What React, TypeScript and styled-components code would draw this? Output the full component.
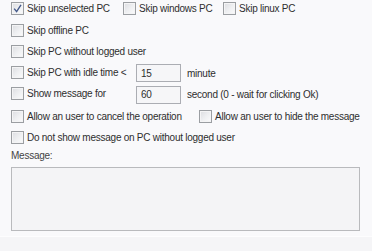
import React from "react";
import styled, { createGlobalStyle } from "styled-components";

const GlobalStyle = createGlobalStyle`
  html, body {
    margin: 0;
    padding: 0;
    background: #f9f9fb;
  }
  body {
    font-family: "Liberation Sans", Arial, sans-serif;
    font-size: 10px;
    letter-spacing: -0.25px;
    color: #2e2e2e;
  }
`;

const Panel = styled.div`
  width: 372px;
  height: 251px;
  box-sizing: border-box;
  padding: 0 12px 0 11px;
  display: flex;
  flex-direction: column;
  overflow: hidden;
`;

const Options = styled.div`
  display: flex;
  flex-direction: column;
  margin-top: -2px;
`;

const Row = styled.div`
  display: flex;
  align-items: center;
  height: 21.5px;
`;

const Option = styled.label<{ $width?: number }>`
  display: inline-flex;
  align-items: center;
  gap: 3px;
  white-space: nowrap;
  cursor: default;
  width: ${({ $width }) => ($width ? `${$width}px` : "auto")};
  flex: none;
`;

const Box = styled.span`
  width: 13px;
  height: 13px;
  box-sizing: border-box;
  border: 1px solid #9b9ea2;
  background: linear-gradient(135deg, #dcdde1 0%, #eff0f2 55%, #fbfbfc 100%);
  box-shadow: inset 0 0 0 1px #f4f4f5;
  display: inline-flex;
  align-items: center;
  justify-content: center;
  flex: none;
`;

const CheckBox = ({ checked }: { checked?: boolean }) => (
  <Box>
    {checked && (
      <svg width="9" height="9" viewBox="0 0 9 9">
        <path d="M1.2 4.6 L3.6 7.6 L8 0.8" fill="none" stroke="#44598a" strokeWidth="1.4" />
      </svg>
    )}
  </Box>
);

const LabelCell = styled.div`
  width: 125px;
  flex: none;
`;

const NumberField = styled.input`
  width: 45px;
  height: 18px;
  box-sizing: border-box;
  border: 1px solid #abadb3;
  background: #f6f6f8;
  padding: 0 4px;
  margin: 0 6px 0 0;
  font: inherit;
  letter-spacing: inherit;
  color: #2e2e2e;
  outline: none;
`;

const Caption = styled.div`
  height: 13px;
  line-height: 13px;
  color: #444;
`;

const MessageBox = styled.textarea`
  margin-top: 5.5px;
  width: 100%;
  height: 64px;
  box-sizing: border-box;
  border: 1px solid #b9babd;
  background: #f4f4f6;
  resize: none;
  outline: none;
  font: inherit;
`;

const Footer = styled.div`
  margin: auto -12px 0 -11px;
  height: 14px;
  border-top: 1px solid #fdfdfe;
  background: #f5f5f7;
`;

const Check = ({ label, checked, width }: { label: string; checked?: boolean; width?: number }) => (
  <Option $width={width}>
    <CheckBox checked={checked} />
    {label}
  </Option>
);

export default function App() {
  return (
    <>
      <GlobalStyle />
      <Panel>
        <Options>
          <Row>
            <Check label="Skip unselected PC" checked width={112} />
            <Check label="Skip windows PC" width={100} />
            <Check label="Skip linux PC" />
          </Row>
          <Row>
            <Check label="Skip offline PC" />
          </Row>
          <Row>
            <Check label="Skip PC without logged user" />
          </Row>
          <Row>
            <LabelCell>
              <Check label="Skip PC with idle time <" />
            </LabelCell>
            <NumberField defaultValue="15" />
            minute
          </Row>
          <Row>
            <LabelCell>
              <Check label="Show message for" />
            </LabelCell>
            <NumberField defaultValue="60" />
            second (0 - wait for clicking Ok)
          </Row>
          <Row>
            <Check label="Allow an user to cancel the operation" width={188} />
            <Check label="Allow an user to hide the message" />
          </Row>
          <Row>
            <Check label="Do not show message on PC without logged user" />
          </Row>
        </Options>
        <Caption>Message:</Caption>
        <MessageBox />
        <Footer />
      </Panel>
    </>
  );
}
